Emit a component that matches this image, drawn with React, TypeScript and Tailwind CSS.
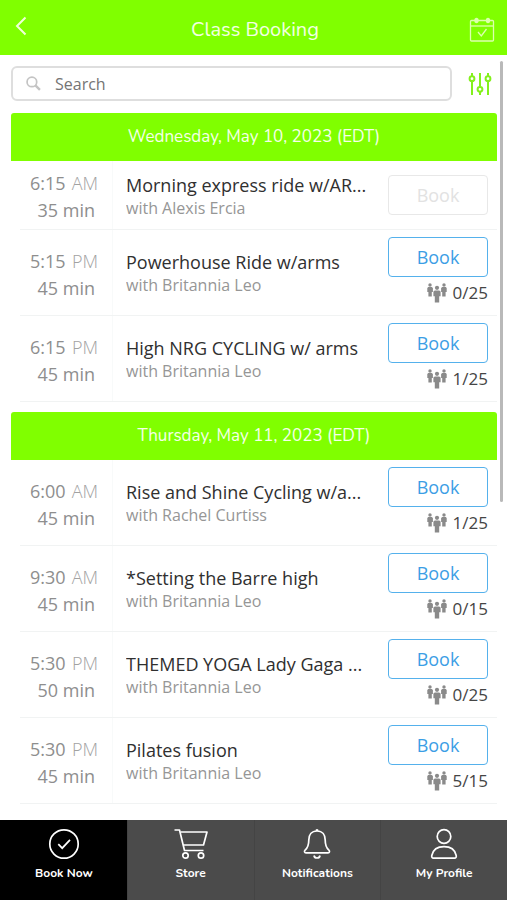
import { useState } from 'react'
import type { ReactNode } from 'react'

interface ClassItem {
  time: string
  period: 'AM' | 'PM'
  duration: string
  title: string
  teacher: string
  spots?: string
}

interface DaySection {
  date: string
  classes: ClassItem[]
}

const schedule: DaySection[] = [
  {
    date: 'Wednesday, May 10, 2023 (EDT)',
    classes: [
      { time: '6:15', period: 'AM', duration: '35 min', title: 'Morning express ride w/AR...', teacher: 'Alexis Ercia' },
      { time: '5:15', period: 'PM', duration: '45 min', title: 'Powerhouse Ride w/arms', teacher: 'Britannia Leo', spots: '0/25' },
      { time: '6:15', period: 'PM', duration: '45 min', title: 'High NRG CYCLING w/ arms', teacher: 'Britannia Leo', spots: '1/25' },
    ],
  },
  {
    date: 'Thursday, May 11, 2023 (EDT)',
    classes: [
      { time: '6:00', period: 'AM', duration: '45 min', title: 'Rise and Shine Cycling w/a...', teacher: 'Rachel Curtiss', spots: '1/25' },
      { time: '9:30', period: 'AM', duration: '45 min', title: '*Setting the Barre high', teacher: 'Britannia Leo', spots: '0/15' },
      { time: '5:30', period: 'PM', duration: '50 min', title: 'THEMED YOGA Lady Gaga ...', teacher: 'Britannia Leo', spots: '0/25' },
      { time: '5:30', period: 'PM', duration: '45 min', title: 'Pilates fusion', teacher: 'Britannia Leo', spots: '5/15' },
    ],
  },
]

function BackIcon() {
  return (
    <svg width="12" height="20" viewBox="0 0 12 20" fill="none" stroke="#efffd9" strokeWidth="2">
      <path d="M10.500 1.500 L2 10 L10.500 18.500" />
    </svg>
  )
}

function CalendarIcon() {
  return (
    <svg width="26" height="26" viewBox="0 0 26 26" fill="none" stroke="#dcffae" strokeWidth="1.300">
      <rect x="1.500" y="3.500" width="23" height="20.500" rx="1" />
      <path d="M1.500 9 H24.500" />
      <path d="M9 15 L12.300 19 L17.500 12" />
      <ellipse cx="7.500" cy="3.500" rx="2.200" ry="2.700" fill="#dcffae" stroke="none" />
      <ellipse cx="19" cy="3.500" rx="2.200" ry="2.700" fill="#dcffae" stroke="none" />
    </svg>
  )
}

function SearchIcon() {
  return (
    <svg className="shrink-0" width="15" height="15" viewBox="0 0 14 14" fill="none" stroke="#c4c4c4">
      <circle cx="5.500" cy="5.500" r="4.500" strokeWidth="1.600" />
      <path d="M8.800 8.800 L13 13" strokeWidth="2.200" />
    </svg>
  )
}

function FilterIcon() {
  return (
    <svg width="24" height="24" viewBox="0 0 24 24" fill="none" stroke="#84f01c" strokeWidth="2">
      <path d="M4 1 V4.200 M4 9 V23" />
      <path d="M12 1 V15 M12 19.500 V23" />
      <path d="M20 1 V4.200 M20 9 V23" />
      <circle cx="4" cy="6.700" r="2.400" />
      <circle cx="12" cy="17.300" r="2.400" />
      <circle cx="20" cy="6.700" r="2.400" />
    </svg>
  )
}

function PeopleIcon() {
  return (
    <svg width="20" height="20" viewBox="0 0 20 20" fill="#8a8a8a">
      <circle cx="3" cy="2" r="1.700" />
      <path d="M1.200 4 H4.800 L5.900 5 V9 H4.800 V13.500 H1.400 V9 H0.300 V5 Z" />
      <circle cx="17" cy="2" r="1.700" />
      <path d="M15.200 4 H18.800 L19.700 5 V9 H18.600 V13.500 H15.200 V9 H14.100 V5 Z" />
      <circle cx="10" cy="4.800" r="2.100" />
      <path d="M7.800 7.400 H12.200 L13.600 8.600 V13.300 H12.200 V19.500 H7.800 V13.300 H6.400 V8.600 Z" />
    </svg>
  )
}

function CheckCircleIcon() {
  return (
    <svg width="32" height="32" viewBox="0 0 32 32" fill="none" stroke="#fff" strokeWidth="1.700">
      <circle cx="16" cy="16" r="14.200" />
      <path d="M10.300 16.200 L14.200 20.200 L22 11.800" />
    </svg>
  )
}

function CartIcon() {
  return (
    <svg width="34" height="32" viewBox="0 0 34 32" fill="none" stroke="#fff" strokeWidth="1.700" strokeLinejoin="round">
      <path d="M0.500 2 H5.500 L10.500 22.500 H29.500" />
      <path d="M6.500 4 H33 L29.500 17 H9.200" />
      <circle cx="11.500" cy="27.500" r="2.700" />
      <circle cx="27" cy="27.500" r="2.700" />
    </svg>
  )
}

function BellIcon() {
  return (
    <svg width="28" height="32" viewBox="0 0 28 32" fill="none" stroke="#fff" strokeWidth="1.700" strokeLinejoin="round">
      <path d="M14 3 C8.500 3 5.800 7 5.800 12 C5.800 18 4.500 20 2.200 22 C1 23.200 1.300 24.800 3 24.800 H25 C26.700 24.800 27 23.200 25.800 22 C23.500 20 22.200 18 22.200 12 C22.200 7 19.500 3 14 3 Z" />
      <path d="M14 1.200 V3" strokeWidth="2.400" />
      <path d="M11 27.500 C11.500 30.800 16.500 30.800 17 27.500" />
    </svg>
  )
}

function ProfileIcon() {
  return (
    <svg width="28" height="32" viewBox="0 0 28 32" fill="none" stroke="#fff" strokeWidth="1.700" strokeLinejoin="round">
      <circle cx="14" cy="8.500" r="6.800" />
      <path d="M3.500 30.200 C2 30.200 1.500 29 1.800 27.500 C3 22 7 18.700 14 18.700 C21 18.700 25 22 26.200 27.500 C26.500 29 26 30.200 24.500 30.200 Z" />
    </svg>
  )
}

const tabs: { label: string; icon: ReactNode }[] = [
  { label: 'Book Now', icon: <CheckCircleIcon /> },
  { label: 'Store', icon: <CartIcon /> },
  { label: 'Notifications', icon: <BellIcon /> },
  { label: 'My Profile', icon: <ProfileIcon /> },
]

function ClassRow({ item }: { item: ClassItem }) {
  const full = !item.spots

  return (
    <li className={`ml-[9px] flex border-b border-[#f1f3f3] ${full ? 'h-[69px]' : 'h-[86px]'}`}>
      {/* Time column */}
      <div className="flex w-[93px] shrink-0 flex-col justify-center border-r border-[#f8fafa] pt-1 pl-[10px] text-lg/[27px] text-[#8e8e8e]">
        <div className="flex justify-between pr-[14px]">
          <span>{item.time}</span>
          <span className="font-light text-[#a2a2a2]">{item.period}</span>
        </div>
        <div className="pr-[17px] text-right">{item.duration}</div>
      </div>

      <div className="flex min-w-0 flex-1 flex-col justify-center pt-px pl-[13px]">
        <h3 className="truncate text-lg/6 text-[#303030]">{item.title}</h3>
        <p className="truncate text-base/[22px] text-[#969696]">with {item.teacher}</p>
      </div>

      <div className={`mr-[9px] flex w-[100px] shrink-0 flex-col ${full ? 'justify-center' : 'pt-[7px]'}`}>
        <button
          type="button"
          disabled={full}
          className={`h-10 w-full rounded border text-lg ${
            full ? 'border-[#e8e8e8] text-[#e2e2e2]' : 'border-[#55b1ec] text-[#3b9ee5]'
          }`}
        >
          Book
        </button>
        {item.spots ? (
          <div className="flex items-center justify-end gap-[6px] pt-1 text-[17px]/6 text-[#454545]">
            <PeopleIcon />
            <span>{item.spots}</span>
          </div>
        ) : null}
      </div>
    </li>
  )
}

export default function App() {
  const [activeTab, setActiveTab] = useState('Book Now')

  return (
    <div className="flex min-h-screen flex-col bg-white font-['Open_Sans',sans-serif]">
      <header className="grid h-[55px] grid-cols-[1fr_auto_1fr] items-center bg-[#80ff00] pr-3 pl-[15px]">
        <button type="button" aria-label="Back" className="justify-self-start pb-1">
          <BackIcon />
        </button>
        <h1 className="pt-1 font-['Nunito','Lato',sans-serif] text-xl text-[#f3ffe3]">Class Booking</h1>
        <button type="button" aria-label="My schedule" className="justify-self-end pt-1">
          <CalendarIcon />
        </button>
      </header>

      <main className="relative flex-1 pr-[10px] pb-4 pl-[11px]">
        {/* Scroll indicator */}
        <div className="absolute top-[6px] right-1 h-[441px] w-[3px] rounded-full bg-[#b9b9b9]" />

        <div className="flex items-center gap-4 pt-[11px] pr-[5px]">
          <label className="flex h-[35px] flex-1 items-center gap-[14px] rounded-md border-2 border-[#dedede] px-[13px]">
            <SearchIcon />
            <input
              type="text"
              aria-label="Search"
              placeholder="Search"
              className="w-full min-w-0 text-base text-[#444] outline-none placeholder:text-[#757575]"
            />
          </label>
          <button type="button" aria-label="Filters">
            <FilterIcon />
          </button>
        </div>

        <div className="flex flex-col gap-[10px] pt-3">
          {schedule.map((day) => (
            <section key={day.date}>
              <h2 className="flex h-12 items-center justify-center rounded-t-[3px] bg-[#80ff00] font-['Nunito','Lato',sans-serif] text-[17px] text-[#f6ffe9]">
                {day.date}
              </h2>
              <ul>
                {day.classes.map((item, i) => (
                  <ClassRow key={i} item={item} />
                ))}
              </ul>
            </section>
          ))}
        </div>
      </main>

      <nav className="sticky bottom-0 grid h-20 grid-cols-4 bg-[#4b4b4b] font-['Nunito','Lato',sans-serif] text-xs font-bold text-white">
        {tabs.map((tab) => (
          <button
            key={tab.label}
            type="button"
            onClick={() => setActiveTab(tab.label)}
            className={`flex flex-col items-center gap-[5px] border-l pt-2 ${
              tab.label === activeTab ? 'border-black bg-black' : 'border-[#444] bg-[#4b4b4b]'
            }`}
          >
            {tab.icon}
            <span>{tab.label}</span>
          </button>
        ))}
      </nav>
    </div>
  )
}
